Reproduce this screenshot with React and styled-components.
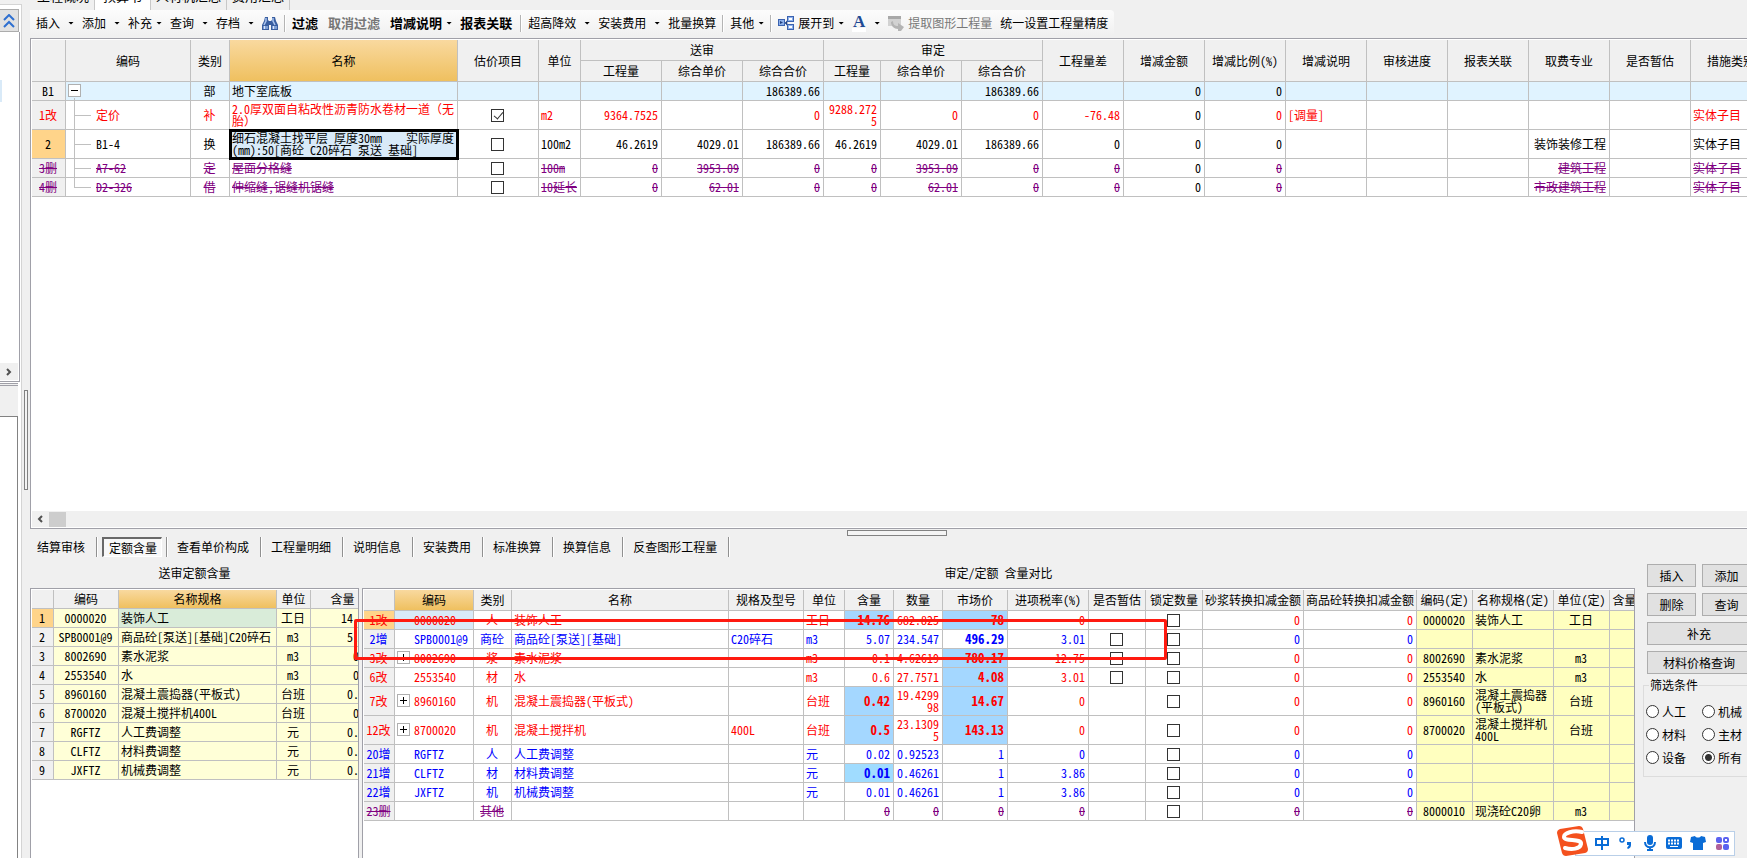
import { useState } from 'react';
import styled, { createGlobalStyle, css } from 'styled-components';

const RED = '#ff0000';
const BLUE = '#0000ff';
const PURPLE = '#800080';

const GlobalStyle = createGlobalStyle`
  * {
    box-sizing: border-box;
  }

  body {
    margin: 0;
    overflow: hidden;
    background: #f0f0f0;
  }

  body,
  button,
  input {
    font-family: 'Noto Sans Mono CJK SC', 'Noto Sans CJK SC', sans-serif;
    font-size: 12px;
    line-height: 12px;
    color: #000;
  }
`;

const Page = styled.div`
  position: relative;
  display: flex;
  height: 100vh;
  overflow: hidden;
`;

/* ---------- left dock ---------- */

const Dock = styled.aside`
  flex: none;
  display: flex;
  flex-direction: column;
  width: 22px;
  margin-top: 4px;
  padding-top: 4px;
  border-top: 1px solid #d4d4d4;
  border-right: 1px solid #d4d4d4;
  background: #fff;
`;

const CollapseButton = styled.button`
  flex: none;
  width: 19px;
  height: 23px;
  padding: 0;
  border: 1px solid #acacac;
  border-left: 0;
  background: #e1e1e1;

  svg {
    display: block;
    margin: auto;
  }
`;

const DockTree = styled.div`
  flex: none;
  display: flex;
  flex-direction: column;
  justify-content: space-between;
  width: 20px;
  height: 350px;
  padding: 48px 1px 1px 0;
  border-right: 1px solid #a0a0a8;
  border-bottom: 1px solid #a0a0a8;
`;

const DockSelection = styled.div`
  width: 2px;
  height: 22px;
  background: #d9eaf8;
`;

const DockScroll = styled.div`
  display: flex;
  align-items: center;
  justify-content: center;
  height: 17px;
  background: #f0f0f0;
`;

const DockHeader = styled.div`
  flex: none;
  width: 18px;
  height: 33px;
  margin-top: 1px;
  border-top: 3px double #a0a0a8;
  background: #f0f0f0;
`;

const DockBody = styled.div`
  flex: 1;
  width: 18px;
  border-top: 1px solid #828282;
  border-right: 1px solid #828282;
`;

const Gutter = styled.div`
  flex: none;
  display: flex;
  align-items: center;
  justify-content: center;
  width: 8px;
  padding-top: 22px;
`;

const Grip = styled.div`
  width: ${(p) => (p.$vertical ? '4px' : '100px')};
  height: ${(p) => (p.$vertical ? '100px' : '6px')};
  border: 1px solid #828282;
  background: #f4f4f4;
`;

/* ---------- main area ---------- */

const Main = styled.main`
  flex: 1;
  min-width: 0;
  display: flex;
  flex-direction: column;
`;

const PageTabs = styled.nav`
  flex: none;
  display: flex;
  align-items: flex-end;
  height: 10px;
  padding-left: 2px;
  overflow: hidden;
`;

const PageTab = styled.button`
  flex: none;
  height: 24px;
  padding: 0 ${(p) => (p.$active ? '8px' : '5px')} 6px;
  border: 0;
  border-right: 1px solid #c8c8c8;
  background: ${(p) => (p.$active ? '#fff' : 'transparent')};
  font-size: 13px;
  line-height: 13px;
`;

const Toolbar = styled.div`
  flex: none;
  align-self: flex-start;
  display: flex;
  align-items: center;
  gap: 8px;
  height: 26px;
  margin-bottom: 2px;
  padding: 0 6px;
  border-radius: 0 4px 4px 0;
  background: linear-gradient(#fcfcfc, #f0f0f0);
  white-space: nowrap;
`;

const ToolButton = styled.button`
  display: flex;
  align-items: center;
  gap: 4px;
  padding: 0;
  border: 0;
  background: none;
  font-size: ${(p) => (p.$bold ? '13px' : '12px')};
  font-weight: ${(p) => (p.$bold ? 'bold' : 'normal')};
  color: ${(p) => (p.disabled ? '#777' : '#000')};
  margin-right: ${(p) => (p.$bold && !p.$menu ? '2px' : '0')};

  svg {
    display: block;
  }
`;

const Caret = styled.span`
  width: 6px;
  height: 3px;
  margin-left: ${(p) => (p.$wide ? '4px' : '0')};
  background: #000;
  clip-path: polygon(0 0, 100% 0, 50% 100%);
`;

const ToolDivider = styled.span`
  width: 2px;
  height: 17px;
  margin: 0 -2px;
  border-left: 1px solid #b4b4b4;
  border-right: 1px solid #fff;
`;

const GridBox = styled.section`
  display: flex;
  flex-direction: column;
  min-width: 0;
  overflow: hidden;
  padding: 1px 0 0 1px;
  border: 1px solid #a0a0a8;
  border-bottom: 0;
  background: #fff;
`;

const BudgetBox = styled(GridBox)`
  flex: 1;
  min-height: 0;
  padding-bottom: 1px;
  border-right: 0;
  border-bottom: 1px solid #a0a0a8;
`;

const Viewport = styled.div`
  flex: 1;
  min-height: 0;
  overflow: hidden;
`;

const Table = styled.table`
  width: 0;
  min-width: ${(p) => p.$width}px;
  table-layout: fixed;
  border-collapse: separate;
  border-spacing: 0;
`;

const Row = styled.tr`
  height: ${(p) => p.$height || 19}px;
`;

const HeadCell = styled.th`
  padding: 0;
  border-right: 1px solid #c0c0c0;
  border-bottom: 1px solid #c0c0c0;
  background: ${(p) => (p.$active ? 'linear-gradient(#f9d99f, #efc05f)' : '#f0f0f0')};
  font-weight: normal;
  white-space: nowrap;
`;

const Cell = styled.td`
  padding: 0 3px 0 2px;
  border-right: 1px solid #c0c0c0;
  border-bottom: 1px solid #c0c0c0;
  background: ${(p) => p.$bg || '#fff'};
  color: ${(p) => p.$color || '#000'};
  font-size: ${(p) => (p.$bold ? '13px' : '12px')};
  font-weight: ${(p) => (p.$bold ? 'bold' : 'normal')};
  text-align: ${(p) => p.$align || 'left'};
  text-decoration: ${(p) => (p.$strike ? 'line-through' : 'none')};
  white-space: pre;
  overflow: hidden;

  ${(p) =>
    p.$focused &&
    css`
      position: relative;
      z-index: 1;
      outline: 3px solid #000;
      outline-offset: -2px;
      background: #d9eaf8;
    `}
`;

const TreeCell = styled(Cell)`
  position: relative;
  padding-left: 30px;

  &::before {
    content: '';
    position: absolute;
    left: 8px;
    top: ${(p) => (p.$root ? '16px' : '0')};
    height: ${(p) => (p.$last ? '50%' : '100%')};
    border-left: 1px solid #c0c0c0;
  }

  &::after {
    content: '';
    position: absolute;
    left: 8px;
    top: 50%;
    width: ${(p) => (p.$root ? '0' : '17px')};
    border-top: 1px solid #c0c0c0;
  }
`;

const CodeCell = styled(Cell)`
  position: relative;
  padding-left: 19px;
`;

const Expander = styled.button`
  position: absolute;
  left: 2px;
  top: calc(50% - 7px);
  z-index: 1;
  width: 13px;
  height: 13px;
  padding: 0;
  border: 1px solid #b0b0b0;
  background: #fff;

  svg {
    display: block;
    margin: auto;
  }
`;

const CheckBox = styled.input`
  appearance: none;
  display: block;
  position: relative;
  width: 13px;
  height: 13px;
  margin: 0 auto;
  border: 1px solid #333;
  background: #fff;

  &:checked::after {
    content: '';
    position: absolute;
    left: 4px;
    top: 0;
    width: 4px;
    height: 8px;
    border: solid #333;
    border-width: 0 1px 1px 0;
    transform: rotate(40deg);
  }
`;

const ScrollBar = styled.div`
  flex: none;
  display: flex;
  align-items: center;
  gap: 5px;
  height: 16px;
  padding-left: 4px;
  background: #f0f0f0;
`;

const ScrollThumb = styled.div`
  width: 17px;
  height: 15px;
  background: #cdcdcd;
`;

/* ---------- lower area ---------- */

const Splitter = styled.div`
  flex: none;
  display: flex;
  justify-content: center;
  padding: 1px 0 1px 16px;
`;

const DetailTabs = styled.nav`
  flex: none;
  display: flex;
  align-items: center;
  height: 20px;
`;

const DetailTab = styled.button`
  flex: none;
  height: 20px;
  padding: 0 11px 0 10px;
  border: 0;
  border-right: 1px solid #909090;
  box-shadow: 1px 0 #fff;
  background: none;
  white-space: nowrap;

  &:first-child {
    padding-left: 7px;
  }
`;

const ActiveTabSlot = styled.span`
  display: flex;
  padding: 0 4px 0 5px;
  border-right: 1px solid #909090;
  box-shadow: 1px 0 #fff;
`;

const ActiveTab = styled.button`
  height: 20px;
  padding: 1px 4px 0 5px;
  border: 1px solid #fff;
  border-top: 2px solid #696969;
  border-left: 2px solid #696969;
  background: #f8f8f8;
`;

const Lower = styled.div`
  flex: none;
  position: relative;
  display: grid;
  grid-template-columns: 329px minmax(0, 1fr) 109px;
  grid-template-rows: 31px 270px;
  column-gap: 3px;
`;

const GridTitle = styled.h2`
  margin: 0;
  font-size: 12px;
  line-height: 31px;
  font-weight: normal;
  text-align: center;
`;

const Marker = styled.div`
  position: absolute;
  z-index: 2;
  left: 324px;
  top: 62px;
  width: 813px;
  height: 41px;
  border: 3px solid #ff1a10;
  border-radius: 2px;
  pointer-events: none;
`;

const Side = styled.div`
  grid-column: 3;
  grid-row: 1 / 3;
  padding: 7px 0 0 5px;
`;

const SideButtons = styled.div`
  display: grid;
  grid-template-columns: 49px 49px;
  gap: 6px;
  padding-left: 4px;
`;

const SideButton = styled.button`
  grid-column: ${(p) => (p.$full ? '1 / 3' : 'auto')};
  height: 23px;
  padding: 0;
  border: 1px solid #adadad;
  background: #e1e1e1;
`;

const Filter = styled.fieldset`
  display: grid;
  grid-template-columns: 56px 56px;
  row-gap: 10px;
  width: 120px;
  margin: 5px 0 0;
  padding: 14px 2px 12px;
  border: 1px solid #dcdcdc;

  legend {
    margin-left: 3px;
    padding: 0 1px;
  }
`;

const RadioLabel = styled.label`
  display: flex;
  align-items: center;
  gap: 3px;
`;

const Radio = styled.input`
  appearance: none;
  flex: none;
  width: 13px;
  height: 13px;
  margin: 0;
  border: 1px solid #333;
  border-radius: 50%;
  background: #fff;

  &:checked {
    background: radial-gradient(circle, #333 3px, #fff 4px);
  }
`;

/* ---------- input method bar ---------- */

const Ime = styled.div`
  position: absolute;
  z-index: 3;
  right: 12px;
  bottom: 1px;
  display: flex;
  align-items: center;
`;

const ImeBar = styled.div`
  display: flex;
  align-items: center;
  gap: 8px;
  height: 25px;
  margin-left: -14px;
  padding: 0 4px 0 18px;
  border: 1px solid #b9cfe8;
  background: #fff;
`;

const ImeLogo = styled.svg`
  position: relative;
  z-index: 1;
  margin-top: -4px;
`;

/* ---------- data ---------- */

const budgetWidths = [34, 125, 39, 228, 81, 42, 81, 81, 81, 57, 81, 81, 81, 81, 81, 81, 81, 81, 81, 81, 81];
const sum = (list) => list.reduce((a, b) => a + b, 0);

const budgetRows = [
  { no: 'B1', root: true, kind: '部', name: '地下室底板', bg: '#e0f3ff', nums: ['', '', '186389.66', '', '', '186389.66', ''], amount: '0', ratio: '0' },
  { no: '1改', code: '定价', kind: '补', name: '2.0厚双面自粘改性沥青防水卷材一道（无\n胎）', color: RED, height: 29, check: true, unit: 'm2', nums: ['9364.7525', '', '0', '9288.272\n5', '0', '0', '-76.48'], amount: '0', ratio: '0', note: '[调量]', measure: '实体子目' },
  { no: '2', code: 'B1-4', kind: '换', name: '细石混凝土找平层 厚度30mm    实际厚度\n(mm):50[商砼 C20碎石 泵送 基础]', height: 29, current: true, check: false, unit: '100m2', nums: ['46.2619', '4029.01', '186389.66', '46.2619', '4029.01', '186389.66', '0'], amount: '0', ratio: '0', major: '装饰装修工程', measure: '实体子目' },
  { no: '3删', code: 'A7-62', kind: '定', name: '屋面分格缝', color: PURPLE, strike: true, check: false, unit: '100m', nums: ['0', '3953.09', '0', '0', '3953.09', '0', '0'], amount: '0', ratio: '0', major: '建筑工程', measure: '实体子目' },
  { no: '4删', code: 'D2-326', kind: '借', name: '伸缩缝,锯缝机锯缝', color: PURPLE, strike: true, last: true, check: false, unit: '10延长', nums: ['0', '62.01', '0', '0', '62.01', '0', '0'], amount: '0', ratio: '0', major: '市政建筑工程', measure: '实体子目' },
];

const quotaWidths = [22, 65, 158, 34, 64];

const quotaRows = [
  ['0000020', '装饰人工', '工日', '14.76'],
  ['SPB0001@9', '商品砼[泵送][基础]C20碎石', 'm3', '5.07'],
  ['8002690', '素水泥浆', 'm3', '0.1'],
  ['2553540', '水', 'm3', '0.6'],
  ['8960160', '混凝土震捣器(平板式)', '台班', '0.42'],
  ['8700020', '混凝土搅拌机400L', '台班', '0.5'],
  ['RGFTZ', '人工费调整', '元', '0.02'],
  ['CLFTZ', '材料费调整', '元', '0.01'],
  ['JXFTZ', '机械费调整', '元', '0.01'],
];

const compareWidths = [31, 79, 38, 217, 75, 41, 49, 49, 65, 81, 57, 57, 101, 113, 56, 81, 56, 54];
const compareHeads = ['', '编码', '类别', '名称', '规格及型号', '单位', '含量', '数量', '市场价', '进项税率(%)', '是否暂估', '锁定数量', '砂浆转换扣减金额', '商品砼转换扣减金额', '编码(定)', '名称规格(定)', '单位(定)', '含量(定)'];

const MARK = '#a4d7ff';

const compareRows = [
  { no: '1改', code: '0000020', kind: '人', name: '装饰人工', unit: '工日', content: '14.76', contentMark: MARK, qty: '682.825', price: '78', priceMark: true, tax: '0', color: RED, current: true, fixed: ['0000020', '装饰人工', '工日'] },
  { no: '2增', code: 'SPB0001@9', kind: '商砼', name: '商品砼[泵送][基础]', spec: 'C20碎石', unit: 'm3', content: '5.07', qty: '234.547', price: '496.29', priceBold: true, tax: '3.01', estimate: true, color: BLUE },
  { no: '3改', plus: true, code: '8002690', kind: '浆', name: '素水泥浆', unit: 'm3', content: '0.1', qty: '4.62619', price: '780.17', priceMark: true, tax: '12.75', estimate: true, color: RED, fixed: ['8002690', '素水泥浆', 'm3'] },
  { no: '6改', code: '2553540', kind: '材', name: '水', unit: 'm3', content: '0.6', qty: '27.7571', price: '4.08', priceMark: true, tax: '3.01', estimate: true, color: RED, fixed: ['2553540', '水', 'm3'] },
  { no: '7改', plus: true, code: '8960160', kind: '机', name: '混凝土震捣器(平板式)', unit: '台班', content: '0.42', contentMark: MARK, qty: '19.4299\n98', price: '14.67', priceMark: true, tax: '0', color: RED, height: 29, fixed: ['8960160', '混凝土震捣器\n(平板式)', '台班'] },
  { no: '12改', plus: true, code: '8700020', kind: '机', name: '混凝土搅拌机', spec: '400L', unit: '台班', content: '0.5', contentMark: MARK, qty: '23.1309\n5', price: '143.13', priceMark: true, tax: '0', color: RED, height: 29, fixed: ['8700020', '混凝土搅拌机\n400L', '台班'] },
  { no: '20增', code: 'RGFTZ', kind: '人', name: '人工费调整', unit: '元', content: '0.02', qty: '0.92523', price: '1', tax: '0', color: BLUE },
  { no: '21增', code: 'CLFTZ', kind: '材', name: '材料费调整', unit: '元', content: '0.01', contentMark: '#a0dcff', qty: '0.46261', price: '1', tax: '3.86', color: BLUE },
  { no: '22增', code: 'JXFTZ', kind: '机', name: '机械费调整', unit: '元', content: '0.01', qty: '0.46261', price: '1', tax: '3.86', color: BLUE },
  { no: '23删', code: '', kind: '其他', name: '', unit: '', content: '0', qty: '0', price: '0', tax: '0', color: PURPLE, strike: true, fixed: ['8000010', '现浇砼C20卵', 'm3'] },
];

/* ---------- icons ---------- */

const Binoculars = () => (
  <svg width="16" height="16" viewBox="0 0 16 16">
    <path d="M3 2h3v3l1 1h2l1-1V2h3l1 4 2 4v5H9v-5H7v5H0v-5l2-4z" fill="#3a5fa0" />
    <path d="M4 3v3L2 10M11 3v3l2 4" stroke="#a9c3ee" strokeWidth="1.5" fill="none" />
    <path d="M1 11h5v3H1zM10 11h5v3h-5z" fill="#7f9fd4" />
    <path d="M2 11h1v3H2zM11 11h1v3h-1z" fill="#dce8fb" />
  </svg>
);

const ExpandIcon = () => (
  <svg width="16" height="16" viewBox="0 0 16 16">
    <path d="M6 8h2l3-4M8 8l3 4" stroke="#1f3f80" strokeWidth="1.5" fill="none" />
    <rect x="0.5" y="4.5" width="6" height="6" fill="#8db0ea" stroke="#3a62b0" />
    <rect x="9.5" y="1.5" width="6" height="5" fill="#8db0ea" stroke="#3a62b0" />
    <rect x="9.5" y="9.5" width="6" height="5" fill="#8db0ea" stroke="#3a62b0" />
    <path d="M2 6l3 1.5L2 9z" fill="#1f3f80" />
    <path d="M11 4h3M11 12h3" stroke="#fff" strokeWidth="2" />
  </svg>
);

const ExtractIcon = () => (
  <svg width="16" height="16" viewBox="0 0 16 16">
    <path d="M0 1h13v10H0z" fill="#d2d2d2" />
    <path d="M0 1h13v3H0z" fill="#a8a8a8" />
    <path d="M5 6c0 4 2 5 5 5V8l6 4-3 4h-3v-2c-4 0-7-3-7-7z" fill="#b4b4b4" />
  </svg>
);

const FontGlyph = styled.span`
  width: 14px;
  height: 17px;
  border-bottom: 4px solid #fff;
  font: bold 17px/13px 'Liberation Serif', serif;
  text-align: center;
  color: #1f4a94;
`;

const Chevron = ({ left }) => (
  <svg width="8" height="8" viewBox="0 0 8 8">
    <path d={left ? 'M6 1L3 4l3 3' : 'M2 1l3 3-3 3'} fill="none" stroke="#505050" strokeWidth="2" />
  </svg>
);

const Sign = ({ plus }) => (
  <svg width="9" height="9" viewBox="0 0 9 9" shapeRendering="crispEdges">
    <path d={plus ? 'M1 4.5h7M4.5 1v7' : 'M1 4.5h7'} stroke="#000" />
  </svg>
);

/* ---------- pieces ---------- */

const Tool = ({ label, icon, menu, wide, bold, disabled, title }) => (
  <ToolButton $bold={bold} $menu={menu} disabled={disabled} aria-label={title}>
    {icon}
    {label}
    {menu ? <Caret $wide={wide} /> : null}
  </ToolButton>
);

const Columns = ({ widths }) => (
  <colgroup>
    {widths.map((w, i) => (
      <col key={i} width={w} />
    ))}
  </colgroup>
);

const BudgetTable = () => (
  <Table $width={sum(budgetWidths)}>
    <Columns widths={budgetWidths} />
    <thead>
      <Row $height={21}>
        <HeadCell rowSpan={2} />
        <HeadCell rowSpan={2}>编码</HeadCell>
        <HeadCell rowSpan={2}>类别</HeadCell>
        <HeadCell rowSpan={2} $active>名称</HeadCell>
        <HeadCell rowSpan={2}>估价项目</HeadCell>
        <HeadCell rowSpan={2}>单位</HeadCell>
        <HeadCell colSpan={3}>送审</HeadCell>
        <HeadCell colSpan={3}>审定</HeadCell>
        {['工程量差', '增减金额', '增减比例(%)', '增减说明', '审核进度', '报表关联', '取费专业', '是否暂估', '措施类别'].map((h) => (
          <HeadCell key={h} rowSpan={2}>{h}</HeadCell>
        ))}
      </Row>
      <Row $height={21}>
        {['工程量', '综合单价', '综合合价', '工程量', '综合单价', '综合合价'].map((h, i) => (
          <HeadCell key={i}>{h}</HeadCell>
        ))}
      </Row>
    </thead>
    <tbody>
      {budgetRows.map((r) => {
        const look = { $color: r.color, $strike: r.strike, $bg: r.bg };
        return (
          <Row key={r.no} $height={r.height}>
            <Cell {...look} $align="center" $bg={r.current ? '#ffd48a' : '#f0f0f0'}>{r.no}</Cell>
            <TreeCell {...look} $root={r.root} $last={r.last}>
              {r.root ? <Expander aria-label="折叠"><Sign /></Expander> : null}
              {r.code}
            </TreeCell>
            <Cell {...look} $align="center">{r.kind}</Cell>
            <Cell {...look} $focused={r.current}>{r.name}</Cell>
            <Cell {...look}>
              {r.root ? null : <CheckBox type="checkbox" aria-label="估价项目" defaultChecked={r.check} />}
            </Cell>
            <Cell {...look}>{r.unit}</Cell>
            {r.nums.map((n, i) => (
              <Cell key={i} {...look} $align="right">{n}</Cell>
            ))}
            <Cell $bg={r.bg} $align="right">{r.amount}</Cell>
            <Cell {...look} $align="right">{r.ratio}</Cell>
            <Cell {...look}>{r.note}</Cell>
            <Cell {...look} />
            <Cell {...look} />
            <Cell {...look} $align="right">{r.major}</Cell>
            <Cell {...look} />
            <Cell {...look}>{r.measure}</Cell>
          </Row>
        );
      })}
    </tbody>
  </Table>
);

const QuotaTable = () => (
  <Table $width={sum(quotaWidths)}>
    <Columns widths={quotaWidths} />
    <thead>
      <Row>
        <HeadCell />
        <HeadCell>编码</HeadCell>
        <HeadCell $active>名称规格</HeadCell>
        <HeadCell>单位</HeadCell>
        <HeadCell>含量</HeadCell>
      </Row>
    </thead>
    <tbody>
      {quotaRows.map(([code, name, unit, content], i) => (
        <Row key={code}>
          <Cell $align="center" $bg={i === 0 ? '#ffd48a' : '#f0f0f0'}>{i + 1}</Cell>
          <Cell $align="center" $bg="#ffffd7">{code}</Cell>
          <Cell $bg={i === 0 ? '#d9ecd9' : '#ffffd7'}>{name}</Cell>
          <Cell $align="center" $bg="#ffffd7">{unit}</Cell>
          <Cell $align="right" $bg="#ffffd7">{content}</Cell>
        </Row>
      ))}
    </tbody>
  </Table>
);

const CompareTable = () => (
  <Table $width={sum(compareWidths)}>
    <Columns widths={compareWidths} />
    <thead>
      <Row $height={21}>
        {compareHeads.map((h, i) => (
          <HeadCell key={i} $active={i === 1}>{h}</HeadCell>
        ))}
      </Row>
    </thead>
    <tbody>
      {compareRows.map((r) => {
        const look = { $color: r.color, $strike: r.strike };
        const fixed = r.fixed || ['', '', ''];
        return (
          <Row key={r.no} $height={r.height}>
            <Cell {...look} $align="center" $bg={r.current ? '#ffd48a' : '#f0f0f0'}>{r.no}</Cell>
            <CodeCell {...look} $bg={r.current ? '#d9eaf8' : '#fff'}>
              {r.plus ? <Expander aria-label="展开"><Sign plus /></Expander> : null}
              {r.code}
            </CodeCell>
            <Cell {...look} $align="center">{r.kind}</Cell>
            <Cell {...look}>{r.name}</Cell>
            <Cell {...look}>{r.spec}</Cell>
            <Cell {...look}>{r.unit}</Cell>
            <Cell {...look} $align="right" $bg={r.contentMark} $bold={!!r.contentMark}>{r.content}</Cell>
            <Cell {...look} $align="right">{r.qty}</Cell>
            <Cell {...look} $align="right" $bg={r.priceMark && MARK} $bold={r.priceMark || r.priceBold}>{r.price}</Cell>
            <Cell {...look} $align="right">{r.tax}</Cell>
            <Cell>{r.estimate ? <CheckBox type="checkbox" aria-label="是否暂估" /> : null}</Cell>
            <Cell><CheckBox type="checkbox" aria-label="锁定数量" /></Cell>
            <Cell {...look} $align="right">0</Cell>
            <Cell {...look} $align="right">0</Cell>
            <Cell $align="center" $bg="#ffffbf">{fixed[0]}</Cell>
            <Cell $bg="#ffffbf">{fixed[1]}</Cell>
            <Cell $align="center" $bg="#ffffbf">{fixed[2]}</Cell>
            <Cell $bg="#ffffbf" />
          </Row>
        );
      })}
    </tbody>
  </Table>
);

const InputMethod = () => (
  <Ime>
    <ImeLogo width="32" height="32" viewBox="0 0 32 32">
      <path d="M3 4L22 1q3 0 4 3l5 20q0 3-3 4L9 31q-3 0-4-3L0 8q0-3 3-4z" fill="#f4511e" />
      <path d="M25 7C16 5 7 8 7 12c0 5 18 1 17 7-1 5-9 6-16 4" fill="none" stroke="#fff" strokeWidth="4" strokeLinecap="round" />
    </ImeLogo>
    <ImeBar>
      <svg width="16" height="16" viewBox="0 0 16 16" fill="none" stroke="#0a6cd6" strokeWidth="2">
        <path d="M2 4h12v6H2zM8 1v14" />
      </svg>
      <svg width="16" height="16" viewBox="0 0 16 16">
        <circle cx="4" cy="5" r="2" fill="none" stroke="#0a6cd6" strokeWidth="1.5" />
        <path d="M9 7h4v3c0 2-1 3-3 4l-1-1 2-3H9z" fill="#0a6cd6" />
      </svg>
      <svg width="16" height="16" viewBox="0 0 16 16">
        <rect x="5" y="0" width="6" height="10" rx="3" fill="#0a6cd6" />
        <path d="M3 7c0 7 10 7 10 0M8 12v3M5 15h6" fill="none" stroke="#0a6cd6" strokeWidth="2" />
      </svg>
      <svg width="16" height="16" viewBox="0 0 16 16">
        <rect x="0" y="2" width="16" height="12" rx="2" fill="#0a6cd6" />
        <path d="M2 5.5h12M2 8.5h12" stroke="#fff" strokeWidth="2" strokeDasharray="2 1" />
        <path d="M4 11.5h8" stroke="#fff" />
      </svg>
      <svg width="16" height="16" viewBox="0 0 16 16">
        <path d="M1 2l4-1c1 2 5 2 6 0l4 1 1 5-3 1v7H3V8L0 7z" fill="#0a6cd6" />
      </svg>
      <svg width="16" height="16" viewBox="0 0 16 16">
        <rect x="2" y="2" width="6" height="6" rx="2" fill="#5b62f0" />
        <rect x="10" y="3" width="4" height="4" rx="1" fill="none" stroke="#5b62f0" strokeWidth="2" />
        <rect x="2" y="9" width="6" height="6" rx="2" fill="#b0609a" />
        <rect x="9" y="9" width="6" height="6" rx="2" fill="#5b62f0" />
      </svg>
    </ImeBar>
  </Ime>
);

const filters = ['人工', '机械', '材料', '主材', '设备', '所有'];
const detailTabs = ['查看单价构成', '工程量明细', '说明信息', '安装费用', '标准换算', '换算信息', '反查图形工程量'];

const App = () => {
  const [filter, setFilter] = useState('所有');

  return (
    <Page>
      <GlobalStyle />
      <Dock>
        <CollapseButton aria-label="收起">
          <svg width="12" height="14" viewBox="0 0 12 14" fill="none" stroke="#2e6fd0" strokeWidth="2">
            <path d="M1 6l5-5 5 5M1 13l5-5 5 5" />
          </svg>
        </CollapseButton>
        <DockTree>
          <DockSelection />
          <DockScroll><Chevron /></DockScroll>
        </DockTree>
        <DockHeader />
        <DockBody />
      </Dock>
      <Gutter><Grip $vertical /></Gutter>
      <Main>
        <PageTabs>
          <PageTab>工程概况</PageTab>
          <PageTab $active>预算书</PageTab>
          <PageTab>人材机汇总</PageTab>
          <PageTab>费用汇总</PageTab>
        </PageTabs>
        <Toolbar>
          <Tool label="插入" menu wide />
          <Tool label="添加" menu wide />
          <Tool label="补充" menu />
          <Tool label="查询" menu wide />
          <Tool label="存档" menu wide />
          <Tool icon={<Binoculars />} title="查找" />
          <ToolDivider />
          <Tool label="过滤" bold />
          <Tool label="取消过滤" bold disabled />
          <Tool label="增减说明" bold menu />
          <Tool label="报表关联" bold />
          <ToolDivider />
          <Tool label="超高降效" menu wide />
          <Tool label="安装费用" menu wide />
          <Tool label="批量换算" />
          <ToolDivider />
          <Tool label="其他" menu />
          <ToolDivider />
          <Tool icon={<ExpandIcon />} label="展开到" menu />
          <Tool icon={<FontGlyph>A</FontGlyph>} menu wide />
          <Tool icon={<ExtractIcon />} label="提取图形工程量" disabled />
          <Tool label="统一设置工程量精度" />
        </Toolbar>
        <BudgetBox>
          <Viewport><BudgetTable /></Viewport>
          <ScrollBar>
            <Chevron left />
            <ScrollThumb />
          </ScrollBar>
        </BudgetBox>
        <Splitter><Grip /></Splitter>
        <DetailTabs>
          <DetailTab>结算审核</DetailTab>
          <ActiveTabSlot><ActiveTab>定额含量</ActiveTab></ActiveTabSlot>
          {detailTabs.map((t) => (
            <DetailTab key={t}>{t}</DetailTab>
          ))}
        </DetailTabs>
        <Lower>
          <GridTitle>送审定额含量</GridTitle>
          <GridTitle>审定/定额 含量对比</GridTitle>
          <GridBox><QuotaTable /></GridBox>
          <GridBox><CompareTable /></GridBox>
          <Side>
            <SideButtons>
              <SideButton>插入</SideButton>
              <SideButton>添加</SideButton>
              <SideButton>删除</SideButton>
              <SideButton>查询</SideButton>
              <SideButton $full>补充</SideButton>
              <SideButton $full>材料价格查询</SideButton>
            </SideButtons>
            <Filter>
              <legend>筛选条件</legend>
              {filters.map((f) => (
                <RadioLabel key={f}>
                  <Radio type="radio" name="filter" checked={filter === f} onChange={() => setFilter(f)} />
                  {f}
                </RadioLabel>
              ))}
            </Filter>
          </Side>
          <Marker />
        </Lower>
      </Main>
      <InputMethod />
    </Page>
  );
};

export default App;
